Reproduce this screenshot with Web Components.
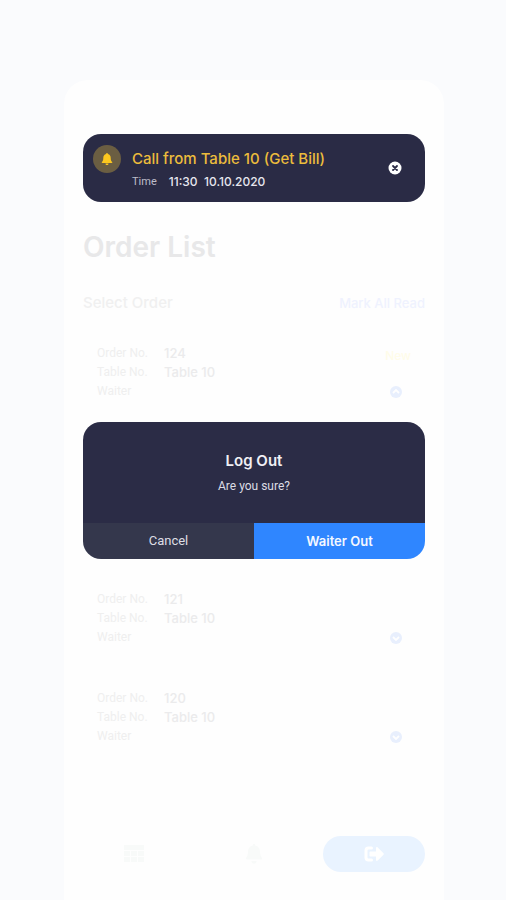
<!DOCTYPE html>
<html lang="en">
<head>
<meta charset="utf-8">
<meta name="viewport" content="width=device-width, initial-scale=1">
<title>Order List</title>
<style>
    body {
        margin: 0;
        background: #fafbfd;
        font-family: Inter, "Liberation Sans", sans-serif;
    }
</style>
</head>
<body>
<waiter-screen>
    <call-toast time="11:30&nbsp; 10.10.2020">Call from Table 10 (Get Bill)</call-toast>
    <list-header heading="Order List" label="Select Order" action="Mark All Read"></list-header>
    <order-card number="124" table="Table 10" badge="New" open></order-card>
    <confirm-dialog heading="Log Out" cancel="Cancel" accept="Waiter Out">Are you sure?</confirm-dialog>
    <order-card number="121" table="Table 10"></order-card>
    <order-card number="120" table="Table 10"></order-card>
    <tab-bar slot="footer"></tab-bar>
</waiter-screen>

<script>
    class BaseElement extends HTMLElement {
        connectedCallback() {
            if (this.shadowRoot) {
                return;
            }
            const shadow = this.attachShadow({ mode: "open" });
            const template = document.createElement("template");
            template.innerHTML = this.render();
            shadow.appendChild(template.content.cloneNode(true));
        }
        attr(name) {
            return this.getAttribute(name) || "";
        }
    }

    class WaiterScreen extends BaseElement {
        render() {
            return `
                <style>
                    :host {
                        display: flex;
                        box-sizing: border-box;
                        min-height: 100vh;
                        padding: 80px 62px 0 64px;
                    }
                    .panel {
                        flex: 1;
                        display: flex;
                        flex-direction: column;
                        padding: 54px 19px 28px;
                        border-radius: 24px 24px 0 0;
                        background: #fefefe;
                    }
                    main {
                        flex: 1;
                    }
                </style>
                <div class="panel">
                    <main><slot></slot></main>
                    <slot name="footer"></slot>
                </div>
            `;
        }
    }

    class CallToast extends BaseElement {
        render() {
            return `
                <style>
                    :host {
                        display: flex;
                        align-items: center;
                        box-sizing: border-box;
                        min-height: 68px;
                        padding: 0 23px 0 10px;
                        border-radius: 18px;
                        background: #2a2b45;
                        color: #e6e6ee;
                    }
                    .bell {
                        align-self: flex-start;
                        width: 28px;
                        height: 28px;
                        margin: 11px 11px 0 0;
                    }
                    .text {
                        flex: 1;
                        padding-top: 4px;
                    }
                    .title {
                        color: #ecbc3c;
                        font-size: 15px;
                        font-weight: 500;
                        line-height: 20px;
                    }
                    .meta {
                        display: flex;
                        gap: 12px;
                        margin-top: 4px;
                        font-size: 12px;
                        line-height: 18px;
                    }
                    .label {
                        color: #bdbdc9;
                        font-family: Roboto, sans-serif;
                        font-size: 11px;
                    }
                    .value {
                        font-weight: 500;
                    }
                    button {
                        display: flex;
                        padding: 0;
                        border: 0;
                        background: none;
                        cursor: pointer;
                    }
                </style>
                <svg class="bell" viewBox="0 0 28 28" aria-hidden="true">
                    <circle cx="14" cy="14" r="14" fill="#6b5e42"/>
                    <path d="M14 8c.6 0 .9.4.9.9 1.900.5 2.800 2 2.800 4 0 2.200.6 3.200 1.500 4.200.3.500 0 .9-.5.9H9.300c-.5 0-.8-.4-.5-.9.900-1 1.500-2 1.500-4.200 0-2 .9-3.500 2.800-4 0-.5.300-.9.900-.9zM12.500 18.400h3c0 1-.6 1.600-1.500 1.600s-1.500-.6-1.500-1.600z" fill="#fcc81f"/>
                </svg>
                <div class="text">
                    <div class="title"><slot></slot></div>
                    <div class="meta"><span class="label">Time</span><span class="value">${this.attr("time")}</span></div>
                </div>
                <button type="button" aria-label="Dismiss">
                    <svg width="14" height="14" viewBox="0 0 14 14">
                        <circle cx="7" cy="7" r="6.500" fill="#fff"/>
                        <path d="M5 5l4 4M9 5l-4 4" stroke="#2a2b45" stroke-width="1.800" stroke-linecap="round"/>
                    </svg>
                </button>
            `;
        }
    }

    class ListHeader extends BaseElement {
        render() {
            return `
                <style>
                    :host {
                        display: block;
                        margin: 27px 0 31px;
                    }
                    h1 {
                        margin: 0;
                        color: #e8e8e9;
                        font-size: 28px;
                        font-weight: 600;
                        line-height: 36px;
                    }
                    .row {
                        display: flex;
                        align-items: center;
                        justify-content: space-between;
                        margin-top: 28px;
                        color: #f0f0f0;
                        font-size: 15px;
                        font-weight: 500;
                        line-height: 20px;
                    }
                    a {
                        color: #eff2fe;
                        font-size: 13px;
                        text-decoration: none;
                    }
                </style>
                <h1>${this.attr("heading")}</h1>
                <div class="row">
                    <span>${this.attr("label")}</span>
                    <a href="#read">${this.attr("action")}</a>
                </div>
            `;
        }
    }

    class OrderCard extends BaseElement {
        render() {
            const arrow = this.hasAttribute("open") ? "M4 8l3-3 3 3" : "M4 6l3 3 3-3";
            return `
                <style>
                    :host {
                        display: flex;
                        justify-content: space-between;
                        margin-bottom: 42px;
                        padding: 0 14px;
                        font-size: 13px;
                        line-height: 19px;
                    }
                    :host([open]) {
                        margin-bottom: 21px;
                    }
                    dl {
                        display: grid;
                        grid-template-columns: 67px auto;
                        grid-auto-rows: 19px;
                        margin: 0;
                    }
                    dt {
                        color: #efefef;
                        font-family: Roboto, sans-serif;
                        font-size: 12px;
                    }
                    dd {
                        margin: 0;
                        color: #ebebec;
                        font-weight: 500;
                    }
                    .side {
                        display: flex;
                        flex-direction: column;
                        align-items: flex-end;
                    }
                    .badge {
                        padding-top: 2px;
                        color: #fffce9;
                        font-size: 12px;
                        font-weight: 500;
                    }
                    button {
                        display: flex;
                        margin: auto 8px 2px;
                        padding: 0;
                        border: 0;
                        background: none;
                        cursor: pointer;
                    }
                </style>
                <dl>
                    <dt>Order No.</dt><dd>${this.attr("number")}</dd>
                    <dt>Table No.</dt><dd>${this.attr("table")}</dd>
                    <dt>Waiter</dt><dd></dd>
                </dl>
                <div class="side">
                    ${this.hasAttribute("badge") ? `<span class="badge">${this.attr("badge")}</span>` : ""}
                    <button type="button" aria-label="Toggle details">
                        <svg width="14" height="14" viewBox="0 0 14 14">
                            <circle cx="7" cy="7" r="6" fill="#e8effd"/>
                            <path d="${arrow}" fill="none" stroke="#fefefe" stroke-width="1.800"/>
                        </svg>
                    </button>
                </div>
            `;
        }
    }

    class ConfirmDialog extends BaseElement {
        render() {
            return `
                <style>
                    :host {
                        display: block;
                        margin-bottom: 31px;
                        border-radius: 18px;
                        color: #f0f0f5;
                        overflow: hidden;
                        text-align: center;
                    }
                    .body {
                        padding: 28px 20px;
                        background: #2b2c46;
                    }
                    h2 {
                        margin: 0;
                        font-size: 15px;
                        font-weight: 600;
                        line-height: 22px;
                    }
                    p {
                        margin: 5px 0 0;
                        color: #dcdce4;
                        font-family: Roboto, sans-serif;
                        font-size: 12px;
                        line-height: 18px;
                    }
                    .actions {
                        display: grid;
                        grid-template-columns: 1fr 1fr;
                    }
                    button {
                        height: 36px;
                        padding: 0;
                        border: 0;
                        background: #34374c;
                        color: #dedee4;
                        font: 400 13px/20px Roboto, sans-serif;
                        cursor: pointer;
                    }
                    .accept {
                        background: #2f86ff;
                        color: #f4f8ff;
                        font-family: Inter, "Liberation Sans", sans-serif;
                        font-weight: 600;
                    }
                </style>
                <div role="alertdialog" aria-labelledby="heading">
                    <div class="body">
                        <h2 id="heading">${this.attr("heading")}</h2>
                        <p><slot></slot></p>
                    </div>
                    <div class="actions">
                        <button type="button">${this.attr("cancel")}</button>
                        <button type="button" class="accept">${this.attr("accept")}</button>
                    </div>
                </div>
            `;
        }
    }

    class TabBar extends BaseElement {
        render() {
            return `
                <style>
                    :host {
                        display: block;
                    }
                    nav {
                        display: grid;
                        grid-template-columns: 102px 1fr 102px;
                    }
                    button {
                        display: flex;
                        align-items: center;
                        justify-content: center;
                        height: 36px;
                        padding: 0;
                        border: 0;
                        border-radius: 18px;
                        background: none;
                        cursor: pointer;
                    }
                    .active {
                        background: #e9f3ff;
                    }
                </style>
                <nav>
                    <button type="button" aria-label="Orders">
                        <svg width="22" height="20" viewBox="0 0 22 20" fill="#f8faf9">
                            <path d="M1 1h20v5H1zM1 7h6v5H1zM8 7h6v5H8zM15 7h6v5h-6zM1 13h6v5H1zM8 13h6v5H8zM15 13h6v5h-6z"/>
                        </svg>
                    </button>
                    <button type="button" aria-label="Calls">
                        <svg width="18" height="20" viewBox="0 0 18 20" fill="#f8faf9">
                            <path d="M9 0c.9 0 1.300.6 1.300 1.400C13.500 2 15 4.500 15 7.500c0 3.500 1 5 2 6.500.5.700 0 1.500-.8 1.500H1.800c-.8 0-1.300-.8-.8-1.500 1-1.500 2-3 2-6.500 0-3 1.500-5.500 4.700-6.100C7.700.6 8.100 0 9 0zM6.500 17h5c0 1.700-1 2.700-2.500 2.700S6.500 18.700 6.500 17z"/>
                        </svg>
                    </button>
                    <button type="button" class="active" aria-label="Log out">
                        <svg width="20" height="16" viewBox="0 0 20 16">
                            <path d="M7.500 2H4.500A2.500 2.500 0 0 0 2 4.500v7A2.500 2.500 0 0 0 4.500 14h3" fill="none" stroke="#fff" stroke-width="3" stroke-linecap="round"/>
                            <path d="M6.500 5.500H12V2c0-1 1-1.300 1.700-.6l5.800 5.800c.5.500.5 1.100 0 1.600l-5.800 5.800c-.7.700-1.700.4-1.700-.6v-3.500H6.500c-.6 0-1-.4-1-1v-3c0-.6.4-1 1-1z" fill="#fff"/>
                        </svg>
                    </button>
                </nav>
            `;
        }
    }

    customElements.define("waiter-screen", WaiterScreen);
    customElements.define("call-toast", CallToast);
    customElements.define("list-header", ListHeader);
    customElements.define("order-card", OrderCard);
    customElements.define("confirm-dialog", ConfirmDialog);
    customElements.define("tab-bar", TabBar);
</script>
</body>
</html>
